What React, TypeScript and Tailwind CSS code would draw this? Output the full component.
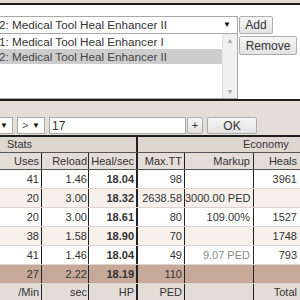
import React from "react";

type Row = {
  uses: string;
  reload: string;
  heal: string;
  maxtt: string;
  markup: string;
  markupGray?: boolean;
  heals: string;
  bg: string;
};

const rows: Row[] = [
  { uses: "41", reload: "1.46", heal: "18.04", maxtt: "98", markup: "", heals: "3961", bg: "bg-white" },
  { uses: "20", reload: "3.00", heal: "18.32", maxtt: "2638.58", markup: "3000.00 PED", heals: "", bg: "bg-[#f6f0ea]" },
  { uses: "20", reload: "3.00", heal: "18.61", maxtt: "80", markup: "109.00%", heals: "1527", bg: "bg-white" },
  { uses: "38", reload: "1.58", heal: "18.90", maxtt: "70", markup: "", heals: "1748", bg: "bg-[#f6f0ea]" },
  { uses: "41", reload: "1.46", heal: "18.04", maxtt: "49", markup: "9.07 PED", markupGray: true, heals: "793", bg: "bg-white" },
  { uses: "27", reload: "2.22", heal: "18.19", maxtt: "110", markup: "", heals: "", bg: "bg-[#c6a998]" },
];

function Cells({
  a,
  b,
  c,
  d,
  e,
  f,
  eGray,
  boldC,
}: {
  a: string;
  b: string;
  c: string;
  d: string;
  e: string;
  f: string;
  eGray?: boolean;
  boldC?: boolean;
}) {
  return (
    <>
      <div className="w-[42px] shrink-0 border-r border-[#222] text-right pr-[2px] whitespace-nowrap">{a}</div>
      <div className="w-[47px] shrink-0 border-r border-[#222] text-right pr-[1px] whitespace-nowrap">{b}</div>
      <div className={`w-[49px] shrink-0 border-r-2 border-[#222] text-right pr-[2px] whitespace-nowrap ${boldC ? "font-bold" : ""}`}>{c}</div>
      <div className="w-[47px] shrink-0 border-r border-[#222] text-right pr-[2px] whitespace-nowrap">{d}</div>
      <div className={`w-[69px] shrink-0 border-r border-[#222] text-right pr-[3px] whitespace-nowrap ${eGray ? "text-[#8a8a8a]" : ""}`}>{e}</div>
      <div className="w-[46px] shrink-0 text-right pr-[3px] whitespace-nowrap">{f}</div>
    </>
  );
}

function Arrow() {
  return <span className="text-[8px] leading-none text-[#111]">▼</span>;
}

export default function App() {
  return (
    <div className="w-[300px] h-[300px] overflow-hidden bg-white font-['Liberation_Sans',Arial,sans-serif] text-[11px] text-[#333]">
      <div className="h-[3px] bg-[#e0dbd5]" />
      <div className="h-[2px] bg-[#1e1e1e]" />
      {/* top white panel */}
      <div className="h-[94px] bg-white pt-[11px] flex">
        <div className="ml-[-4px] w-[242px] shrink-0 flex flex-col text-[11.7px]">
          <div className="h-[18px] border border-[#a9a9a9] bg-white flex items-center justify-between pl-[2px] pr-[6px]">
            <span className="whitespace-nowrap">2: Medical Tool Heal Enhancer II</span>
            <Arrow />
          </div>
          <div className="h-[65px] border-x border-b border-[#a9a9a9] bg-white flex">
            <div className="flex-1 flex flex-col">
              <div className="h-[15px] leading-[15px] pl-[2px] whitespace-nowrap">1: Medical Tool Heal Enhancer I</div>
              <div className="h-[15px] leading-[15px] pl-[2px] bg-[#cdcdcd] text-[#444] whitespace-nowrap">2: Medical Tool Heal Enhancer II</div>
            </div>
            <div className="w-[15px] bg-[#f0f0f0] border-l border-[#e4e4e4] flex flex-col justify-between items-center py-[3px]">
              <span className="text-[7px] leading-none text-[#a8a8a8]">▲</span>
              <span className="text-[7px] leading-none text-[#a8a8a8]">▼</span>
            </div>
          </div>
        </div>
        <div className="ml-[1px] flex flex-col items-start">
          <button className="w-[34px] h-[18px] border border-[#adadad] rounded-[2px] bg-gradient-to-b from-[#f6f6f6] to-[#e2e2e2] text-[12px] leading-none text-[#333] flex items-center justify-center">
            Add
          </button>
          <button className="mt-[2px] w-[58px] h-[19px] border border-[#adadad] rounded-[2px] bg-gradient-to-b from-[#f6f6f6] to-[#e2e2e2] text-[12px] leading-none text-[#333] flex items-center justify-center">
            Remove
          </button>
        </div>
      </div>
      <div className="h-[2px] bg-[#1e1e1e]" />
      {/* filter row */}
      <div className="h-[34px] bg-[#e3ded8] pt-[16px] flex items-start">
        <div className="ml-[-17px] w-[30px] h-[17px] border border-[#a9a9a9] bg-white flex items-center justify-end pr-[4px]">
          <Arrow />
        </div>
        <div className="ml-[4px] w-[28px] h-[17px] border border-[#a9a9a9] bg-white flex items-center justify-between pl-[4px] pr-[4px]">
          <span className="text-[#555] leading-none">&gt;</span>
          <Arrow />
        </div>
        <div className="ml-[4px] w-[137px] h-[17px] border border-[#a9a9a9] bg-white flex items-center pl-[2px] text-[12px]">
          17
        </div>
        <button className="ml-[1px] w-[16px] h-[17px] border border-[#adadad] rounded-[2px] bg-gradient-to-b from-[#f6f6f6] to-[#e2e2e2] text-[11px] leading-none flex items-center justify-center">
          +
        </button>
        <button className="ml-[4px] w-[50px] h-[17px] border border-[#adadad] rounded-[2px] bg-gradient-to-b from-[#f6f6f6] to-[#e2e2e2] text-[12px] leading-none flex items-center justify-center">
          OK
        </button>
      </div>
      <div className="h-[2px] bg-[#1e1e1e]" />
      {/* table */}
      <div className="flex h-[16px] leading-[15px] bg-[#ded7d0] border-b border-[#555]">
        <div className="w-[138px] shrink-0 border-r-2 border-[#222] pl-[7px]">Stats</div>
        <div className="flex-1 pl-[105px]">Economy</div>
      </div>
      <div className="flex h-[17px] leading-[16px] bg-[#e3ddd7] border-b border-[#555]">
        <Cells a="Uses" b="Reload" c="Heal/sec" d="Max.TT" e="Markup" f="Heals" />
      </div>
      {rows.map((r, i) => (
        <div key={i} className={`flex h-[19px] leading-[18px] border-b border-[#dcd4cc] ${r.bg}`}>
          <Cells a={r.uses} b={r.reload} c={r.heal} d={r.maxtt} e={r.markup} f={r.heals} eGray={r.markupGray} boldC />
        </div>
      ))}
      <div className="flex h-[18px] leading-[17px] bg-[#e3ddd7]">
        <Cells a="/Min" b="sec" c="HP" d="PED" e="" f="Total" />
      </div>
    </div>
  );
}
